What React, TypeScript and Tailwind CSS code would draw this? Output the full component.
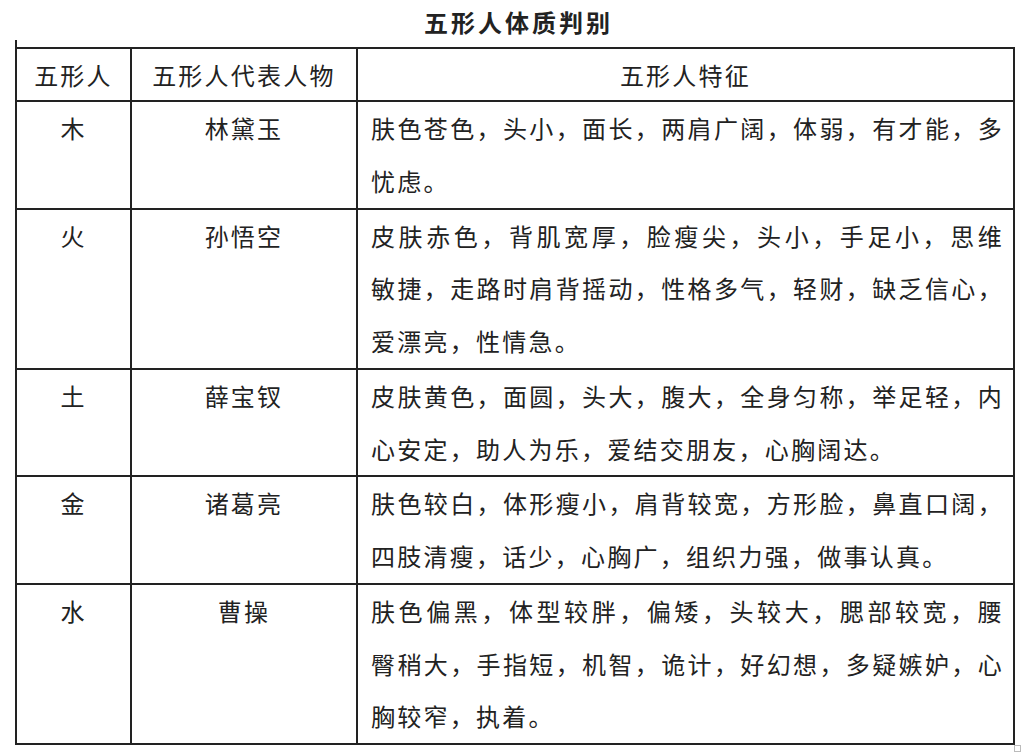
const rows = [
  {
    element: '木',
    person: '林黛玉',
    traits: ['肤色苍色，头小，面长，两肩广阔，体弱，有才能，多', '忧虑。'],
  },
  {
    element: '火',
    person: '孙悟空',
    traits: [
      '皮肤赤色，背肌宽厚，脸瘦尖，头小，手足小，思维',
      '敏捷，走路时肩背摇动，性格多气，轻财，缺乏信心，',
      '爱漂亮，性情急。',
    ],
  },
  {
    element: '土',
    person: '薛宝钗',
    traits: ['皮肤黄色，面圆，头大，腹大，全身匀称，举足轻，内', '心安定，助人为乐，爱结交朋友，心胸阔达。'],
  },
  {
    element: '金',
    person: '诸葛亮',
    traits: ['肤色较白，体形瘦小，肩背较宽，方形脸，鼻直口阔，', '四肢清瘦，话少，心胸广，组织力强，做事认真。'],
  },
  {
    element: '水',
    person: '曹操',
    traits: [
      '肤色偏黑，体型较胖，偏矮，头较大，腮部较宽，腰',
      '臀稍大，手指短，机智，诡计，好幻想，多疑嫉妒，心',
      '胸较窄，执着。',
    ],
  },
];

export default function App() {
  return (
    <div
      className="w-[1024px] h-[754px] bg-white text-[#222] overflow-hidden"
      style={{ fontFamily: '"Noto Sans CJK SC", "Noto Sans", sans-serif' }}
    >
      {/* Title */}
      <div className="h-[40px] flex items-center justify-center pt-[4px] pl-[13px]">
        <h1 className="text-[24px] font-bold tracking-[3px] leading-none">五形人体质判别</h1>
      </div>

      {/* Table */}
      <div className="ml-[15px] w-fit border-l-2 border-[#222] pt-[7px]">
        <table className="table-fixed border-collapse w-[997px] text-[24px] tracking-[2.25px]">
          <colgroup>
            <col className="w-[114px]" />
            <col className="w-[226px]" />
            <col className="w-[657px]" />
          </colgroup>
          <thead>
            <tr className="leading-[51px]">
              <th className="border-2 border-l-0 border-[#222] font-normal text-center p-0">五形人</th>
              <th className="border-2 border-[#222] font-normal text-center p-0">五形人代表人物</th>
              <th className="border-2 border-[#222] font-normal text-center p-0">五形人特征</th>
            </tr>
          </thead>
          <tbody>
            {rows.map((row) => (
              <tr key={row.element} className="leading-[52.75px] align-top">
                <td className="border-2 border-l-0 border-[#222] text-center p-0">{row.element}</td>
                <td className="border-2 border-[#222] text-center p-0">{row.person}</td>
                <td className="border-2 border-[#222] pl-[13px] pr-[9px] py-0">
                  {row.traits.map((line, i) =>
                    i < row.traits.length - 1 ? (
                      <div key={i} className="whitespace-nowrap text-justify [text-align-last:justify]">
                        {line}
                      </div>
                    ) : (
                      <div key={i} className="whitespace-nowrap">
                        {line}
                      </div>
                    )
                  )}
                </td>
              </tr>
            ))}
          </tbody>
        </table>
      </div>

      {/* table resize handle */}
      <div className="ml-[1014px] w-[7px] h-[7px] border border-[#bbb]" />
    </div>
  );
}
